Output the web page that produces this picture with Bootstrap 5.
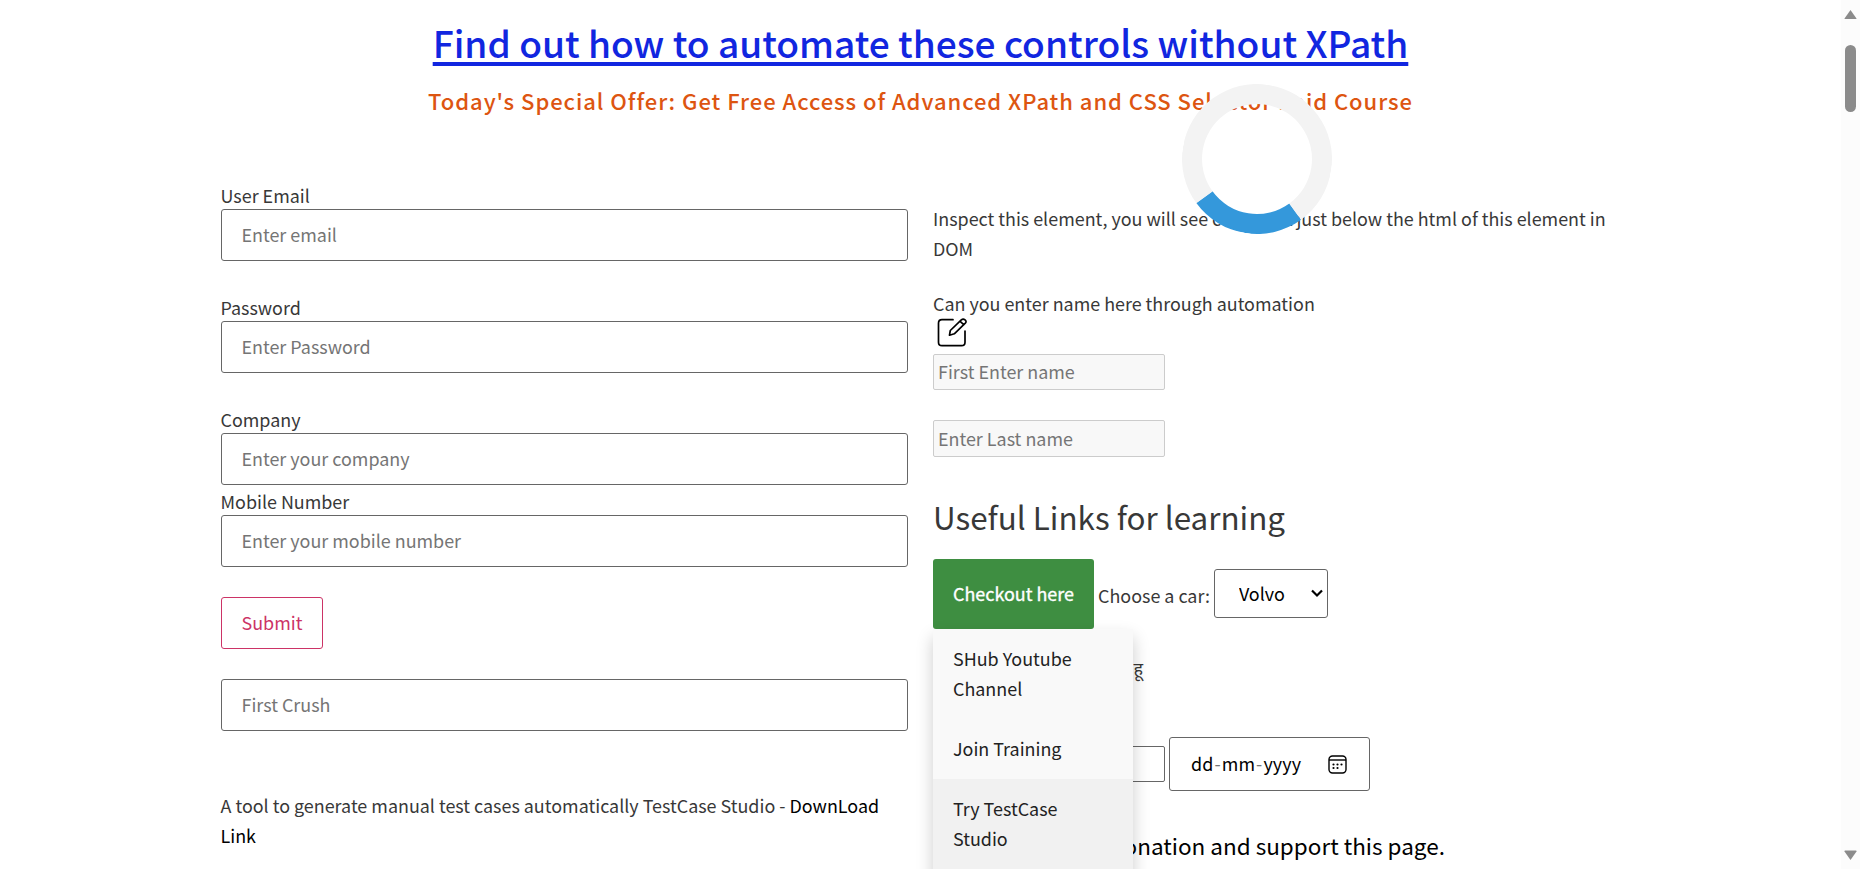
<!DOCTYPE html>
<html lang="en">
<head>
<meta charset="utf-8">
<title>XPath practice page</title>
<meta name="viewport" content="width=device-width, initial-scale=1">
<link href="https://cdn.jsdelivr.net/npm/bootstrap@5.3.0/dist/css/bootstrap.min.css" rel="stylesheet">
<style>
html,body{height:100%;overflow:hidden}
body{font-family:"Noto Sans CJK SC","Noto Sans",sans-serif;font-size:17.92px;line-height:30px;color:#383838;background:#fff}
.page{height:100vh}
.wrap{width:1400px}
.cols{display:grid;grid-template-columns:687.5px 687.5px;column-gap:25px;margin-top:49px}
.title{font-size:37.1px;line-height:46px;font-weight:500;padding-top:19px}
.title a{color:#1126e0;text-decoration-thickness:4px;text-underline-offset:4px;text-decoration-skip-ink:none}
.offer{font-size:22px;line-height:30px;font-weight:500;color:#dd5511;letter-spacing:.96px;margin-top:20px}
.lbl{display:block;height:29px;line-height:30px}
.fld{display:block;width:100%;height:52px;border:1px solid #666;border-radius:3px;padding:6px 20px 8px;background:#fff;color:#000}
input::placeholder{color:#757575;opacity:1}
.gap-l{margin-bottom:31px}
.gap-s{margin-bottom:1px}
.submit{width:102px;height:52px;margin:30px 0;border:1px solid #cc3366;border-radius:3px;background:#fff;color:#cc3366;padding:0 0 2px 1px}
.after{margin-top:59px}
.after a{color:#000;text-decoration:none}
.small-fld{display:block;width:232px;height:36px;border:1px solid #ccc;border-radius:2px;background:#f8f8f8;padding:0 4px 2px}
.small-fld.last{height:37px;margin-top:30px;padding-bottom:1px}
.intro{padding-top:39px}
.edit-ico{height:36px;padding-left:.5px}
.useful{font-size:31.4px;line-height:40px;font-weight:400;margin:40px 0 22px}
.drop-btn{display:block;width:161px;height:70px;background:#3e8e41;color:#fff;border:0;border-radius:3px;-webkit-text-stroke:.35px #fff;padding:0 0 2px}
.menu{left:0;top:70px;width:200px;height:260px;background:#f9f9f9;box-shadow:0 8px 16px rgba(0,0,0,.2);z-index:2}
.menu a{display:block;padding:14px 20px 16px;color:#222;text-decoration:none}
.menu a.over{background:#f1f1f1}
.car-lbl{margin:21px 4px 0}
.car-box{margin-top:10px}
.car{width:114px;height:49px;border:1px solid #666;border-radius:3px;background:#fff;color:#000;padding:0 0 2px 24px;appearance:none;line-height:30px}
.chev{right:5px;top:20px}
.hindi{margin-top:23px;padding-left:200.5px}
.dates{margin-top:55px;gap:4px}
.plain-fld{width:232px;height:36px;border:1px solid #666;border-radius:2px;background:#fff}
.date{width:201px;height:54px;border:1px solid #666;border-radius:3px;padding:0 22px 1px 21px;color:#000;letter-spacing:.1px}
.date span{padding-bottom:1px}
.date svg{margin-top:1px}
.date i{font-style:normal;color:#757575;padding:0 1px}
.donate{font-size:22.5px;color:#000;margin-top:39px;padding-left:10px;white-space:nowrap}
.loader{left:1182px;top:84px;width:150px;height:150px;border:20px solid #f3f3f3;border-bottom-color:#3498db;border-radius:50%;transform:rotate(9deg);z-index:3}
.bar{width:19px;background:#fcfcfc;padding:10px 0 9px}
.thumb{width:11px;height:67px;border-radius:6px;background:#8b8b8b;margin-top:26px}
</style>
</head>
<body>
<div class="page d-flex overflow-hidden">
  <main class="flex-grow-1 position-relative overflow-hidden">
    <div class="wrap mx-auto">
      <h1 class="title text-center mb-0"><a href="#">Find out how to automate these controls without XPath</a></h1>
      <h2 class="offer text-center mb-0">Today's Special Offer: Get Free Access of Advanced XPath and CSS Selector Paid Course</h2>
      <div class="cols">
        <form class="pt-3">
          <label class="lbl" for="email">User Email</label>
          <input class="fld gap-l" id="email" placeholder="Enter email">
          <label class="lbl" for="pass">Password</label>
          <input class="fld gap-l" id="pass" placeholder="Enter Password">
          <label class="lbl" for="comp">Company</label>
          <input class="fld gap-s" id="comp" placeholder="Enter your company">
          <label class="lbl" for="mob">Mobile Number</label>
          <input class="fld" id="mob" placeholder="Enter your mobile number">
          <button type="button" class="submit d-block">Submit</button>
          <input class="fld" placeholder="First Crush">
          <p class="after mb-0">A tool to generate manual test cases automatically TestCase Studio - <a href="#">DownLoad Link</a></p>
        </form>
        <section class="intro">
          <p class="mb-4 pb-1">Inspect this element, you will see comment just below the html of this element in DOM</p>
          <div style="margin-top:-3px">Can you enter name here through automation</div>
          <div class="edit-ico">
            <svg class="d-block" width="36" height="35" fill="none" stroke="#000" stroke-width="1.7" stroke-linecap="round" stroke-linejoin="round"><path d="M19 1.700H8Q4.500 1.700 4.500 5.200V24.200Q4.500 27.700 8 27.700H27.500Q31 27.700 31 24.200V13"/><path d="M15.500 17.200 16.300 12.500 27.300 1.800Q29.200.3 31 1.800 32.900 3.500 31.300 5.200L20.300 15.800Z M25.800 3.200 29.800 6.700"/></svg>
          </div>
          <input class="small-fld" placeholder="First Enter name">
          <input class="small-fld last" placeholder="Enter Last name">
          <h3 class="useful">Useful Links for learning</h3>
          <div class="d-flex position-relative">
            <button type="button" class="drop-btn">Checkout here</button>
            <nav class="menu position-absolute">
              <a href="#">SHub Youtube Channel</a>
              <a href="#">Join Training</a>
              <a href="#" class="over">Try TestCase Studio</a>
            </nav>
            <label for="car" class="car-lbl">Choose a car:</label>
            <div class="car-box position-relative">
              <select class="car" id="car"><option>Volvo</option></select>
              <svg class="chev position-absolute" width="12" height="9" fill="none" stroke="#000" stroke-width="2.200"><path d="M1 1.500 6 6.500 11 1.500"/></svg>
            </div>
          </div>
          <div class="hindi">हू</div>
          <div class="dates d-flex align-items-center">
            <input class="plain-fld">
            <div class="date d-flex align-items-center justify-content-between"><span>dd<i>-</i>mm<i>-</i>yyyy</span>
              <svg width="19" height="19" fill="none" stroke="#000" stroke-width="1.400"><rect x="1" y="1" width="17" height="17" rx="3.500"/><path d="M1 5H18"/><path d="M9.500 9.500h.01M13.500 9.500h.01M5.500 9.500h.01M5.500 13h.01M9.500 13h.01" stroke-width="2.200" stroke-linecap="round"/></svg>
            </div>
          </div>
          <div class="donate">You can make a donation and support this page.</div>
        </section>
      </div>
    </div>
    <div class="loader position-absolute"></div>
  </main>
  <div class="bar d-flex flex-column align-items-center">
    <svg width="13" height="9" fill="#8b8b8b"><path d="M6.500 0 12.500 8.500Q12.500 9 12 9H1Q.5 9 .5 8.500Z"/></svg>
    <div class="thumb"></div>
    <svg class="mt-auto" width="13" height="10" fill="#8b8b8b"><path d="M6.500 10 12.500 1.500Q12.500.5 12 .5H1Q.5.5.5 1.500Z"/></svg>
  </div>
</div>
<script src="https://cdn.jsdelivr.net/npm/bootstrap@5.3.0/dist/js/bootstrap.bundle.min.js"></script>
</body>
</html>
